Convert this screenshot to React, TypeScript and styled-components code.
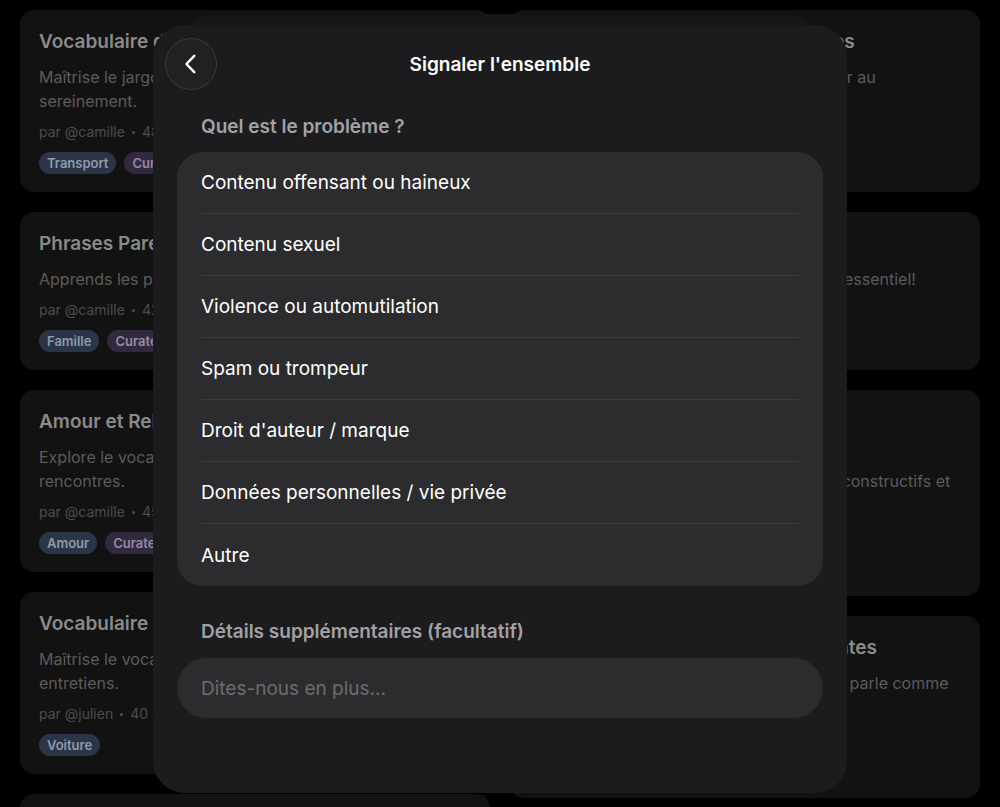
import styled, { createGlobalStyle } from 'styled-components'

const GlobalStyle = createGlobalStyle`
  html, body {
    margin: 0;
    padding: 0;
    background: #000;
    font-family: Inter, "Noto Sans", "Liberation Sans", sans-serif;
    -webkit-font-smoothing: antialiased;
  }
  * { box-sizing: border-box; }
`

type TagTone = 'blue' | 'purple'

interface Deck {
  title: string
  lines: string[]
  author: string
  count: number
  tags: { label: string; tone: TagTone }[]
}

const leftDecks: Deck[] = [
  {
    title: 'Vocabulaire des Transports en Commun',
    lines: ['Maîtrise le jargon des transports pour voyager', 'sereinement.'],
    author: 'camille',
    count: 48,
    tags: [
      { label: 'Transport', tone: 'blue' },
      { label: 'Curated', tone: 'purple' },
    ],
  },
  {
    title: 'Phrases Parentales',
    lines: ['Apprends les phrases du quotidien en famille.'],
    author: 'camille',
    count: 42,
    tags: [
      { label: 'Famille', tone: 'blue' },
      { label: 'Curated', tone: 'purple' },
    ],
  },
  {
    title: 'Amour et Relations',
    lines: ["Explore le vocabulaire de l'amour et des", 'rencontres.'],
    author: 'camille',
    count: 45,
    tags: [
      { label: 'Amour', tone: 'blue' },
      { label: 'Curated', tone: 'purple' },
    ],
  },
  {
    title: 'Vocabulaire Automobile',
    lines: ['Maîtrise le vocabulaire des garages et des', 'entretiens.'],
    author: 'julien',
    count: 40,
    tags: [{ label: 'Voiture', tone: 'blue' }],
  },
  {
    title: 'Au Restaurant',
    lines: ['Commande comme un habitué.'],
    author: 'julien',
    count: 36,
    tags: [{ label: 'Cuisine', tone: 'blue' }],
  },
]

const rightDecks: Deck[] = [
  {
    title: 'Les Voyages et Visites Touristiques',
    lines: ['Tout le vocabulaire pour bien te débrouiller au', 'quotidien.'],
    author: 'camille',
    count: 50,
    tags: [{ label: 'Voyage', tone: 'blue' }],
  },
  {
    title: 'Les Bases',
    lines: ["Pour bien débuter, on commence ici par l'essentiel!"],
    author: 'camille',
    count: 30,
    tags: [{ label: 'Débutant', tone: 'blue' }],
  },
  {
    title: 'Au Travail',
    lines: [
      'Le vocabulaire du monde professionnel',
      'pour animer des réunions, des échanges constructifs et',
      'bienveillants.',
    ],
    author: 'julien',
    count: 44,
    tags: [{ label: 'Travail', tone: 'blue' }],
  },
  {
    title: 'Les Expressions Familières Courantes',
    lines: ["Découvre enfin l'argot de tous les jours et parle comme", 'un vrai Parisien.'],
    author: 'camille',
    count: 38,
    tags: [{ label: 'Argot', tone: 'blue' }],
  },
]

const reasons = [
  'Contenu offensant ou haineux',
  'Contenu sexuel',
  'Violence ou automutilation',
  'Spam ou trompeur',
  "Droit d'auteur / marque",
  'Données personnelles / vie privée',
  'Autre',
]

/* ---------- background library ---------- */

const Page = styled.div`
  height: 807px;
  overflow: hidden;
  display: grid;
  grid-template-columns: 1fr 1fr;
  gap: 20px;
  padding: 10px 20px;
`

const Column = styled.div`
  display: flex;
  flex-direction: column;
  gap: 20px;
`

const Card = styled.div`
  background: #121212;
  border-radius: 14px;
  padding: 20px 19px 18px;
  display: flex;
  flex-direction: column;
  flex-shrink: 0;
`

const CardTitle = styled.div`
  color: #8a8a8a;
  font-size: 19px;
  font-weight: 600;
  line-height: 24px;
  white-space: nowrap;
  overflow: hidden;
`

const CardDesc = styled.div`
  margin-top: 11px;
  color: #5c5c5c;
  font-size: 16px;
  line-height: 24px;
`

const DescLine = styled.span`
  display: block;
  white-space: nowrap;
`

const CardMeta = styled.div`
  margin-top: 9px;
  color: #4d4d4d;
  font-size: 14px;
  line-height: 20px;
  display: flex;
  align-items: center;
  gap: 7px;
`

const MetaDot = styled.span`
  width: 3px;
  height: 3px;
  border-radius: 50%;
  background: #4d4d4d;
`

const Tags = styled.div`
  margin-top: 10px;
  display: flex;
  gap: 8px;
`

const Tag = styled.span<{ $tone: TagTone }>`
  height: 22px;
  padding: 0 8px;
  border-radius: 11px;
  display: inline-flex;
  align-items: center;
  font-size: 13px;
  font-weight: 600;
  background: ${(p) => (p.$tone === 'blue' ? '#2a3648' : '#33293f')};
  color: ${(p) => (p.$tone === 'blue' ? '#8f9aab' : '#958aa4')};
`

const DeckCard = ({ deck }: { deck: Deck }) => (
  <Card>
    <CardTitle>{deck.title}</CardTitle>
    <CardDesc>
      {deck.lines.map((l) => (
        <DescLine key={l}>{l}</DescLine>
      ))}
    </CardDesc>
    <CardMeta>
      <span>par @{deck.author}</span>
      <MetaDot />
      <span>{deck.count} mots</span>
    </CardMeta>
    <Tags>
      {deck.tags.map((t) => (
        <Tag key={t.label} $tone={t.tone}>
          {t.label}
        </Tag>
      ))}
    </Tags>
  </Card>
)

/* ---------- report sheet ---------- */

const StackedSheet = styled.div`
  position: fixed;
  left: 183px;
  top: 14px;
  width: 632px;
  height: 760px;
  border-radius: 30px;
  background: #161617;
`

const Sheet = styled.div`
  position: fixed;
  left: 153px;
  top: 25px;
  width: 694px;
  height: 768px;
  border-radius: 32px;
  background: #1c1c1e;
  display: flex;
  flex-direction: column;
  padding: 13px 24px 0;
`

const Header = styled.div`
  display: grid;
  grid-template-columns: 52px 1fr 52px;
  align-items: center;
  margin: 0 -12px;
`

const BackButton = styled.button`
  width: 52px;
  height: 52px;
  border-radius: 50%;
  border: 1px solid #3d3d40;
  background: #212123;
  display: flex;
  align-items: center;
  justify-content: center;
  padding: 0;
  cursor: pointer;
`

const HeaderTitle = styled.div`
  text-align: center;
  color: #fff;
  font-size: 19px;
  font-weight: 600;
`

const SectionLabel = styled.div<{ $gap: number }>`
  margin-top: ${(p) => p.$gap}px;
  padding-left: 24px;
  color: #a1a1a6;
  font-size: 19px;
  font-weight: 600;
  line-height: 24px;
`

const OptionList = styled.div`
  margin-top: 13px;
  background: #2c2c2e;
  border-radius: 26px;
  display: flex;
  flex-direction: column;
`

const Option = styled.div`
  height: 62px;
  margin: 0 24px;
  display: flex;
  align-items: center;
  color: #fff;
  font-size: 19px;
  border-bottom: 1px solid #3d3d40;

  &:last-child {
    border-bottom: none;
  }
`

const DetailsInput = styled.input`
  margin-top: 14px;
  height: 60px;
  border-radius: 30px;
  border: none;
  outline: none;
  background: #2c2c2e;
  padding: 0 24px;
  color: #fff;
  font-family: inherit;
  font-size: 19px;

  &::placeholder {
    color: #6c6c70;
  }
`

const ChevronLeft = () => (
  <svg width="26" height="26" viewBox="0 0 24 24" fill="none">
    <path d="M15 4.5 L7.8 12 L15 19.5" stroke="#fff" strokeWidth="2.3" strokeLinecap="round" strokeLinejoin="round" />
  </svg>
)

export default function App() {
  return (
    <>
      <GlobalStyle />
      <Page>
        <Column>
          {leftDecks.map((d) => (
            <DeckCard key={d.title} deck={d} />
          ))}
        </Column>
        <Column>
          {rightDecks.map((d) => (
            <DeckCard key={d.title} deck={d} />
          ))}
        </Column>
      </Page>
      <StackedSheet />
      <Sheet>
        <Header>
          <BackButton aria-label="Retour">
            <ChevronLeft />
          </BackButton>
          <HeaderTitle>Signaler l'ensemble</HeaderTitle>
          <span />
        </Header>
        <SectionLabel $gap={25}>Quel est le problème ?</SectionLabel>
        <OptionList>
          {reasons.map((r) => (
            <Option key={r}>{r}</Option>
          ))}
        </OptionList>
        <SectionLabel $gap={34}>Détails supplémentaires (facultatif)</SectionLabel>
        <DetailsInput placeholder="Dites-nous en plus..." />
      </Sheet>
    </>
  )
}
